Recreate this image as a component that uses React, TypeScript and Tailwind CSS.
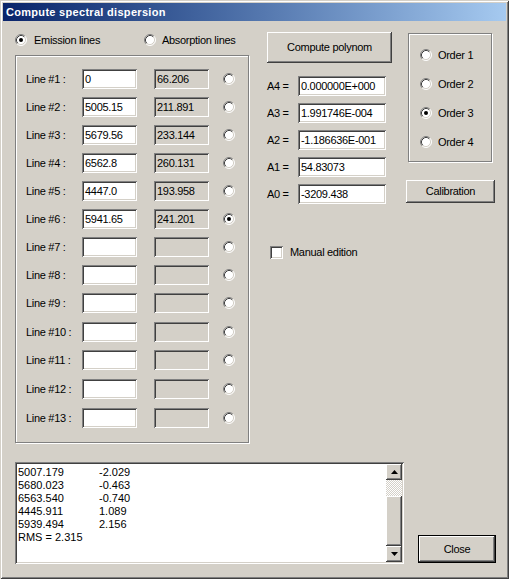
import React from 'react';

const SUNKEN =
  'shadow-[inset_1px_1px_0_#808080,inset_-1px_-1px_0_#ffffff,inset_2px_2px_0_#404040,inset_-2px_-2px_0_#d4d0c8]';
const RAISED =
  'shadow-[inset_-1px_-1px_0_#404040,inset_1px_1px_0_#ffffff,inset_-2px_-2px_0_#808080,inset_2px_2px_0_#d4d0c8]';
const ETCHED = 'border border-[#808080] shadow-[inset_1px_1px_0_#ffffff,1px_1px_0_#ffffff]';

const Radio: React.FC<{ checked?: boolean }> = ({ checked }) => (
  <svg width="12" height="12" viewBox="0 0 12 12" className="shrink-0">
    <circle cx="6" cy="6" r="5" fill="#ffffff" />
    <path d="M2.11 9.89A5.5 5.5 0 0 1 9.89 2.11" stroke="#808080" fill="none" />
    <path d="M9.89 2.11A5.5 5.5 0 0 1 2.11 9.89" stroke="#ffffff" fill="none" />
    <path d="M2.82 9.18A4.5 4.5 0 0 1 9.18 2.82" stroke="#404040" fill="none" />
    <path d="M9.18 2.82A4.5 4.5 0 0 1 2.82 9.18" stroke="#d4d0c8" fill="none" />
    {checked && <circle cx="6" cy="6" r="2" fill="#000000" />}
  </svg>
);

const Field: React.FC<{ value?: string; width: string; disabled?: boolean }> = ({ value, width, disabled }) => (
  <div
    className={`${width} h-[20px] ${SUNKEN} ${disabled ? 'bg-[#d4d0c8]' : 'bg-white'} flex items-center pl-[3px] leading-none whitespace-nowrap overflow-hidden`}
  >
    {value}
  </div>
);

const lines: [string, string][] = [
  ['0', '66.206'],
  ['5005.15', '211.891'],
  ['5679.56', '233.144'],
  ['6562.8', '260.131'],
  ['4447.0', '193.958'],
  ['5941.65', '241.201'],
  ['', ''],
  ['', ''],
  ['', ''],
  ['', ''],
  ['', ''],
  ['', ''],
  ['', ''],
];

// the lower rows sit a pixel further apart in the original dialog
const rowNudge = (i: number) => (i === 9 || i === 11 || i === 12 ? 'mt-[1px]' : '');

const coeffs = [
  ['A4 =', '0.000000E+000'],
  ['A3 =', '1.991746E-004'],
  ['A2 =', '-1.186636E-001'],
  ['A1 =', '54.83073'],
  ['A0 =', '-3209.438'],
];

const residuals = [
  ['5007.179', '-2.029'],
  ['5680.023', '-0.463'],
  ['6563.540', '-0.740'],
  ['4445.911', '1.089'],
  ['5939.494', '2.156'],
];

const ScrollArrow: React.FC<{ down?: boolean }> = ({ down }) => (
  <div className={`w-[16px] h-[16px] bg-[#d4d0c8] ${RAISED} flex items-center justify-center`}>
    <svg width="7" height="4" viewBox="0 0 7 4">
      <polygon points={down ? '0,0 7,0 3.5,4' : '3.5,0 7,4 0,4'} fill="#000000" />
    </svg>
  </div>
);

export default function App() {
  return (
    <div className="w-[509px] h-[579px] bg-[#d4d0c8] p-[3px] flex flex-col text-[11px] tracking-[-0.3px] text-black font-['Liberation_Sans',Arial,sans-serif] shadow-[inset_1px_1px_0_#d4d0c8,inset_-1px_-1px_0_#404040,inset_2px_2px_0_#ffffff,inset_-2px_-2px_0_#808080]">
      {/* Title bar */}
      <div className="h-[18px] bg-linear-to-r from-[#0a246a] to-[#a6caf0] flex items-center pl-[3px] text-white font-bold tracking-[0.3px]">
        Compute spectral dispersion
      </div>

      <div className="flex items-start">
        {/* Left column */}
        <div className="ml-[12px] w-[234px] flex flex-col">
          <div className="mt-[12px] h-[14px] flex items-center">
            <div className="w-[129px] flex items-center gap-[7px]">
              <Radio checked />
              <span>Emission lines</span>
            </div>
            <div className="flex items-center gap-[6px]">
              <Radio />
              <span>Absorption lines</span>
            </div>
          </div>

          <div className={`mt-[8px] h-[388px] ${ETCHED} pt-[13px] pl-[10px] flex flex-col gap-[8px]`}>
            {lines.map(([wave, pos], i) => (
              <div key={i} className={`h-[20px] flex items-center ${rowNudge(i)}`}>
                <span className="w-[56px] whitespace-nowrap">Line #{i + 1} :</span>
                <Field value={wave} width="w-[55px]" />
                <div className="ml-[17px]">
                  <Field value={pos} width="w-[55px]" disabled />
                </div>
                <div className="ml-[14px]">
                  <Radio checked={i === 5} />
                </div>
              </div>
            ))}
          </div>
        </div>

        {/* Polynom column */}
        <div className="ml-[18px] mt-[11px] w-[125px] flex flex-col">
          <div className={`h-[31px] ${RAISED} flex items-center justify-center`}>Compute polynom</div>
          <div className="mt-[13px] flex flex-col gap-[7px]">
            {coeffs.map(([label, value]) => (
              <div key={label} className="h-[20px] flex items-center">
                <span className="w-[31px]">{label}</span>
                <Field value={value} width="w-[88px]" />
              </div>
            ))}
          </div>
          <div className="mt-[42px] ml-[3px] h-[13px] flex items-center gap-[7px]">
            <div className={`w-[13px] h-[13px] bg-white ${SUNKEN}`} />
            <span>Manual edition</span>
          </div>
        </div>

        {/* Order column */}
        <div className="ml-[16px] mt-[12px] w-[84px] flex flex-col">
          <div className={`h-[129px] ${ETCHED} pt-[14px] pl-[11px] flex flex-col gap-[15px]`}>
            {[1, 2, 3, 4].map((n) => (
              <div key={n} className="h-[14px] flex items-center gap-[6px]">
                <Radio checked={n === 3} />
                <span>Order {n}</span>
              </div>
            ))}
          </div>
          <div className={`mt-[18px] -ml-[2px] w-[89px] h-[23px] ${RAISED} flex items-center justify-center`}>
            Calibration
          </div>
        </div>
      </div>

      {/* Bottom row */}
      <div className="mt-[19px] flex items-start">
        <div className={`ml-[12px] w-[389px] h-[102px] bg-white ${SUNKEN} p-[2px] flex tracking-normal`}>
          <div className="flex-1 pt-[2px] pl-[1px] leading-[13px]">
            {residuals.map(([a, b]) => (
              <div key={a} className="flex">
                <span className="w-[81px]">{a}</span>
                <span>{b}</span>
              </div>
            ))}
            <div>RMS = 2.315</div>
          </div>
          <div className="w-[16px] flex flex-col">
            <ScrollArrow />
            <div className="h-[16px] bg-[repeating-conic-gradient(#d4d0c8_0_25%,#ffffff_0_50%)] bg-[length:2px_2px]" />
            <div className={`flex-1 bg-[#d4d0c8] ${RAISED}`} />
            <ScrollArrow down />
          </div>
        </div>
        <div className="ml-[14px] mt-[73px] w-[78px] h-[28px] border border-black">
          <div className={`w-full h-full ${RAISED} flex items-center justify-center`}>Close</div>
        </div>
      </div>
    </div>
  );
}
